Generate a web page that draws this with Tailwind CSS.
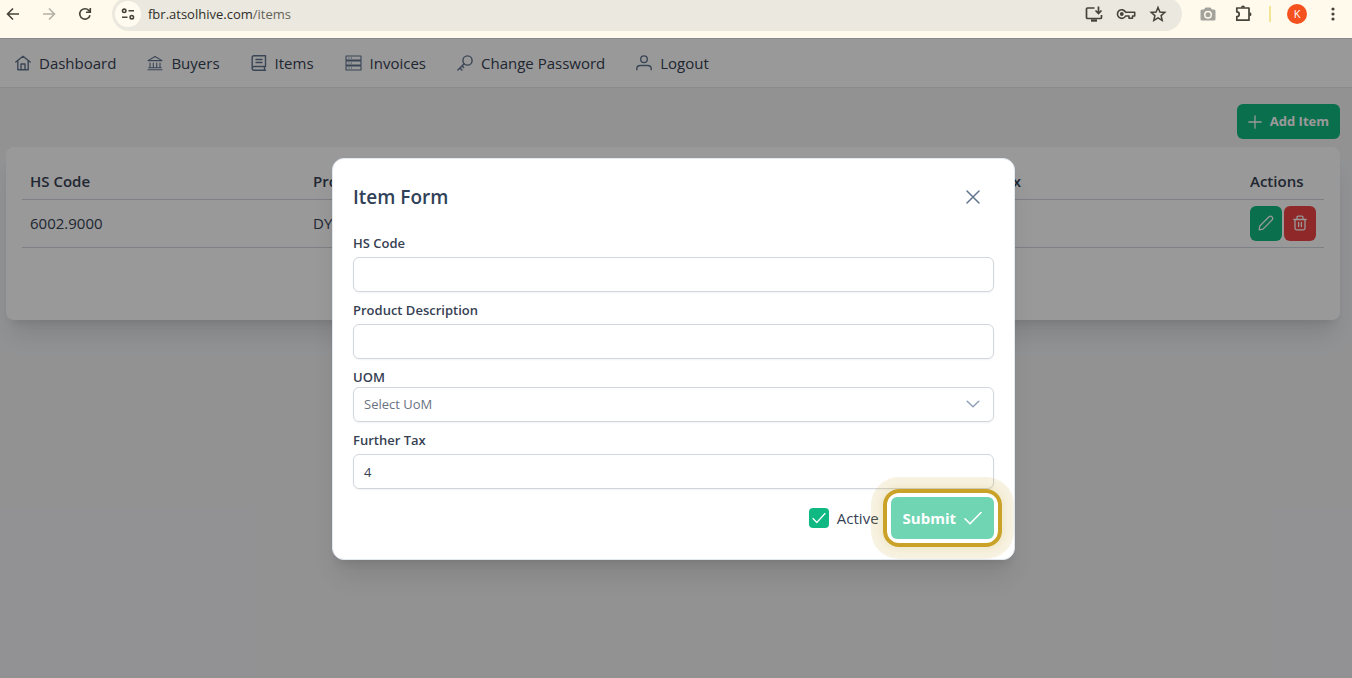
<!DOCTYPE html>
<html lang="en">
<head>
    <meta charset="UTF-8">
    <meta name="viewport" content="width=device-width, initial-scale=1.0">
    <title>Items</title>
    <script src="https://cdn.jsdelivr.net/npm/@tailwindcss/browser@4"></script>
</head>
<body class="font-['Segoe_UI','Open_Sans',sans-serif] min-h-screen flex flex-col bg-gray-100 text-gray-700 text-[15px]">
    <!-- Browser toolbar -->
    <header class="h-[38px] pb-[10px] flex items-center bg-[#fffaeb] text-[#45433a] overflow-hidden shrink-0">
        <div class="flex items-center gap-5 pl-[5px] pr-[19px]">
            <button aria-label="Back">
                <svg class="w-4 h-4" viewBox="0 0 16 16" fill="none" stroke="currentColor" stroke-width="1.6"><path d="M14 8H3M8 2.5 2.5 8 8 13.5"/></svg>
            </button>
            <button aria-label="Forward" class="text-[#b5b1a5]">
                <svg class="w-4 h-4" viewBox="0 0 16 16" fill="none" stroke="currentColor" stroke-width="1.6"><path d="M2 8h11M8 2.5 13.5 8 8 13.5"/></svg>
            </button>
            <button aria-label="Reload">
                <svg class="w-4 h-4" viewBox="0 0 16 16" fill="none" stroke="currentColor" stroke-width="1.6"><path d="M13 9.2A5.2 5.2 0 1 1 11.8 4.4L13 5.8"/><path d="M13.3 2v4.3H9"/></svg>
            </button>
        </div>
        <div class="flex-1 h-[34px] flex items-center bg-[#ebe8df] rounded-full pl-[3px] pr-[14px]">
            <button aria-label="Site information" class="w-[26px] h-[26px] rounded-full bg-[#fffbf0] flex items-center justify-center">
                <svg class="w-[14px] h-[14px]" viewBox="0 0 14 14" fill="none" stroke="currentColor" stroke-width="1.6"><circle cx="3.2" cy="3.8" r="1.7"/><path d="M7.5 3.8H13M1 10.2h5.5"/><circle cx="10.8" cy="10.2" r="1.7"/></svg>
            </button>
            <a href="/items" class="flex-1 pl-[7px] text-[13px] leading-5 text-[#2f2e29]">fbr.atsolhive.com<span class="text-[#66635a]">/items</span></a>
            <div class="flex items-center gap-3">
                <button aria-label="Install app">
                    <svg class="w-5 h-5" viewBox="0 0 20 20" fill="none" stroke="currentColor" stroke-width="1.7"><path d="M10.5 4H3.5q-1 0-1 1v8.500q0 1 1 1h13q1 0 1-1V11"/><path d="M7 16.500h6" stroke-width="2.4"/><path d="M14.500 2.500v6.500M11.500 6.500l3 3 3-3"/></svg>
                </button>
                <button aria-label="Passwords">
                    <svg class="w-5 h-5" viewBox="0 0 20 20" fill="none" stroke="currentColor" stroke-width="1.6"><path d="M9.6 8.200A4.300 4.300 0 1 0 9.600 12H13v2.200h3.500V12h2.200V8.200z" stroke-linejoin="round"/><circle cx="5.800" cy="10" r="1.9" fill="currentColor" stroke="none"/></svg>
                </button>
                <button aria-label="Bookmark">
                    <svg class="w-5 h-5" viewBox="0 0 20 20" fill="none" stroke="currentColor" stroke-width="1.5"><path d="m10 3.500 1.900 4.500 4.900.4-3.700 3.200 1.100 4.800-4.200-2.600-4.200 2.600 1.100-4.800L3.200 8.400 8.100 8z"/></svg>
                </button>
            </div>
        </div>
        <div class="flex items-center pl-[17px] pr-[11px]">
            <button aria-label="Screenshot" class="text-[#a3a19c]">
                <svg class="w-[18px] h-[18px]" viewBox="0 0 18 18" fill="currentColor"><path fill-rule="evenodd" d="M6.500 2.500h5L13 4.500h2q1.500 0 1.500 1.500v8q0 1.500-1.500 1.500H3Q1.500 15.500 1.500 14V6q0-1.500 1.500-1.500h2zM9 5.800a4 4 0 1 0 0 8 4 4 0 0 0 0-8z"/><circle cx="9" cy="9.800" r="2.500"/></svg>
            </button>
            <button aria-label="Extensions" class="ml-[17px]">
                <svg class="w-5 h-5" viewBox="0 0 20 20" fill="none" stroke="currentColor" stroke-width="1.700" stroke-linejoin="round"><path d="M2.800 4h12.200v12.200H2.800v-3.600a2.400 2.400 0 0 0 0-4.800z"/><path d="M7 3.600a2 2 0 0 1 4 0zM15.500 8.200a2 2 0 0 1 0 4z" fill="currentColor" stroke="none"/></svg>
            </button>
            <span class="ml-[15px] w-[2px] h-4 bg-[#f2e596]"></span>
            <button aria-label="Profile" class="ml-4 w-5 h-5 rounded-full bg-[#f4511e] text-white text-[11px] leading-5 text-center">K</button>
            <button aria-label="Menu" class="ml-[18px]">
                <svg class="w-4 h-4" viewBox="0 0 16 16" fill="currentColor"><circle cx="8" cy="3" r="1.600"/><circle cx="8" cy="8" r="1.600"/><circle cx="8" cy="13" r="1.600"/></svg>
            </button>
        </div>
    </header>

    <div class="relative flex-1 flex flex-col">
        <!-- Navigation -->
        <nav class="h-[50px] flex items-center gap-[31px] px-[15px] bg-white border-y border-gray-200">
            <a href="/dashboard" class="flex items-center gap-2">
                <svg class="w-4 h-4 text-slate-500" viewBox="0 0 16 16" fill="none" stroke="currentColor" stroke-width="1.400" stroke-linecap="round" stroke-linejoin="round"><path d="M.8 7 8 1.200 15.200 7M2.800 5.800v9h10.400v-9M6 14.500V9h4v5.500"/></svg>
                Dashboard
            </a>
            <a href="/buyers" class="flex items-center gap-2">
                <svg class="w-4 h-4 text-slate-500" viewBox="0 0 16 16" fill="none" stroke="currentColor" stroke-width="1.100" stroke-linecap="round" stroke-linejoin="round"><path d="M1 5.600 8 1.500l7 4.100zM3 8v4M6.300 8v4M9.700 8v4M13 8v4M1.800 12.700h12.400M1 14.800h14"/></svg>
                Buyers
            </a>
            <a href="/items" class="flex items-center gap-2">
                <svg class="w-4 h-4 text-slate-500" viewBox="0 0 16 16" fill="none" stroke="currentColor" stroke-width="1.400" stroke-linecap="round" stroke-linejoin="round"><path d="M14.500 11.500V.8H3Q1.200.8 1.200 2.600v10.600q0 2 2 2h11.300M14.500 11.500H3q-1.800 0-1.800 1.800M13.500 11.500v3.700M5 4.500h6M5 7.500h6"/></svg>
                Items
            </a>
            <a href="/invoices" class="flex items-center gap-2">
                <svg class="w-[17px] h-4 text-slate-500" viewBox="0 0 17 16" fill="none" stroke="currentColor" stroke-width="1.100" stroke-linejoin="round"><path d="M1 1h15v4H1zM1 6h15v4H1zM1 11h15v4H1zM3.500 3h1M3.500 8h1M3.500 13h1M6 3h1M6 8h1M6 13h1"/></svg>
                Invoices
            </a>
            <a href="/change-password" class="flex items-center gap-2">
                <svg class="w-4 h-4 text-slate-500" viewBox="0 0 16 16" fill="none" stroke="currentColor" stroke-width="1.400" stroke-linecap="round" stroke-linejoin="round"><circle cx="10.500" cy="5.500" r="4.600"/><path d="M7.200 8.800.9 15M3 13l1.900 1.900M5 11l1.600 1.600"/></svg>
                Change Password
            </a>
            <a href="/logout" class="flex items-center gap-2">
                <svg class="w-4 h-4 text-slate-500" viewBox="0 0 16 16" fill="none" stroke="currentColor" stroke-width="1.400" stroke-linecap="round"><circle cx="8" cy="4.200" r="3.300"/><path d="M.8 14.800v-1q0-3.300 3.400-3.300h7.600q3.400 0 3.400 3.300v1"/></svg>
                Logout
            </a>
        </nav>

        <main class="pt-4 pl-[6px] pr-3">
            <div class="flex justify-end mb-2">
                <button class="h-[35px] flex items-center gap-2 px-[11px] rounded-md bg-[#10b981] text-white text-[13px] font-bold">
                    <svg class="w-[14px] h-[14px]" viewBox="0 0 14 14" fill="none" stroke="currentColor" stroke-width="1.300" stroke-linecap="round"><path d="M7 .8v12.400M.8 7h12.400"/></svg>
                    Add Item
                </button>
            </div>

            <div class="bg-white rounded-lg shadow-xl px-4 pt-4 pb-[72px]">
                <table class="w-full table-fixed text-left">
                    <thead>
                        <tr class="h-9 border-b border-gray-300">
                            <th class="w-[283px] px-2 font-semibold">HS Code</th>
                            <th class="px-2 font-semibold">Product Description</th>
                            <th class="px-2 font-semibold">UOM</th>
                            <th class="w-[313px] px-2 font-semibold">Further Tax</th>
                            <th class="w-[82px] px-2 font-semibold">Actions</th>
                        </tr>
                    </thead>
                    <tbody>
                        <tr class="h-12 border-b border-gray-300">
                            <td class="px-2">6002.9000</td>
                            <td class="px-2">DYED FABRIC</td>
                            <td class="px-2">KG</td>
                            <td class="px-2"></td>
                            <td class="pl-2">
                                <div class="flex gap-[2px]">
                                    <button aria-label="Edit" class="w-8 h-[35px] flex items-center justify-center rounded-md bg-[#10b981] text-white">
                                        <svg class="w-4 h-4" viewBox="0 0 16 16" fill="none" stroke="currentColor" stroke-width="1.300" stroke-linejoin="round"><path d="M1.200 14.800 1.800 11 11 1.800q1.600-1.300 3 .1t.1 3L5 14.100z"/></svg>
                                    </button>
                                    <button aria-label="Delete" class="w-8 h-[35px] flex items-center justify-center rounded-md bg-[#ef4444] text-white">
                                        <svg class="w-[14px] h-4" viewBox="0 0 14 16" fill="none" stroke="currentColor" stroke-width="1.300" stroke-linecap="round" stroke-linejoin="round"><path d="M.8 4.500h12.400M2 4.500v8.800q0 1.500 1.500 1.500h7q1.500 0 1.500-1.500V4.500M4 4.300V2.500Q4 1.200 5.300 1.200h3.400q1.300 0 1.300 1.300v1.800M5.600 7.500v4M8.400 7.500v4"/></svg>
                                    </button>
                                </div>
                            </td>
                        </tr>
                    </tbody>
                </table>
            </div>
        </main>

        <!-- Item form modal -->
        <div class="absolute inset-0 bg-black/40 flex items-center justify-center pt-[2px] pr-[5px]">
            <div role="dialog" aria-labelledby="formTitle" class="w-full max-w-[683px] p-5 bg-white border border-slate-200 rounded-xl shadow-xl">
                <div class="flex items-center justify-between h-9 mb-[18px]">
                    <h2 id="formTitle" class="text-[19px] font-semibold text-slate-700">Item Form</h2>
                    <button aria-label="Close" class="w-[42px] h-9 flex items-center justify-center text-slate-500">
                        <svg class="w-[14px] h-[14px]" viewBox="0 0 14 14" fill="none" stroke="currentColor" stroke-width="1.500" stroke-linecap="round"><path d="m1 1 12 12M13 1 1 13"/></svg>
                    </button>
                </div>
                <form class="flex flex-col gap-2 text-[13px]">
                    <div>
                        <label for="hsCode" class="block mb-1 leading-5 font-semibold">HS Code</label>
                        <input id="hsCode" type="text" class="block w-full h-[35px] px-[10px] border border-gray-300 rounded-md shadow-xs">
                    </div>
                    <div>
                        <label for="description" class="block mb-1 leading-5 font-semibold">Product Description</label>
                        <input id="description" type="text" class="block w-full h-[35px] px-[10px] border border-gray-300 rounded-md shadow-xs">
                    </div>
                    <div>
                        <label for="uom" class="block leading-5 font-semibold">UOM</label>
                        <div class="relative">
                            <select id="uom" class="block appearance-none w-full h-[35px] px-[10px] border border-gray-300 rounded-md shadow-xs text-gray-500">
                                <option>Select UoM</option>
                            </select>
                            <svg class="absolute right-[14px] top-[10px] w-[14px] h-[14px] text-slate-400 pointer-events-none" viewBox="0 0 14 14" fill="none" stroke="currentColor" stroke-width="1.500" stroke-linecap="round" stroke-linejoin="round"><path d="m1.200 4.200 5.800 5.600 5.800-5.600"/></svg>
                        </div>
                    </div>
                    <div>
                        <label for="tax" class="block mb-1 leading-5 font-semibold">Further Tax</label>
                        <input id="tax" type="text" value="4" class="block w-full h-[35px] px-[10px] border border-gray-300 rounded-md shadow-xs">
                    </div>
                    <div class="flex items-center justify-end gap-3 text-[15px]">
                        <div class="flex items-center gap-2">
                            <div class="relative w-5 h-5">
                                <input id="active" type="checkbox" checked class="block appearance-none w-5 h-5 rounded bg-[#10b981]">
                                <svg class="absolute inset-[3px] w-[14px] h-[14px] text-white pointer-events-none" viewBox="0 0 14 14" fill="none" stroke="currentColor" stroke-width="1.200" stroke-linecap="round" stroke-linejoin="round"><path d="m1 7.500 3.800 4L13 2.500"/></svg>
                            </div>
                            <label for="active">Active</label>
                        </div>
                        <div class="relative">
                            <button type="button" class="h-[42px] px-3 flex items-center gap-2 rounded-md bg-[#70d5b3] text-white font-bold">
                                Submit
                                <svg class="w-[18px] h-[18px]" viewBox="0 0 18 18" fill="none" stroke="currentColor" stroke-width="1.600" stroke-linecap="round" stroke-linejoin="round"><path d="m1 9.800 5 5L17 3.500"/></svg>
                            </button>
                            <!-- Highlight ring -->
                            <span class="absolute -inset-x-2 -inset-y-2 border-4 border-[#c9a227] rounded-2xl shadow-[0_0_0_12px_rgba(201,162,39,0.14),0_0_8px_2px_rgba(201,162,39,0.14)] pointer-events-none"></span>
                        </div>
                    </div>
                </form>
            </div>
        </div>
    </div>
</body>
</html>
